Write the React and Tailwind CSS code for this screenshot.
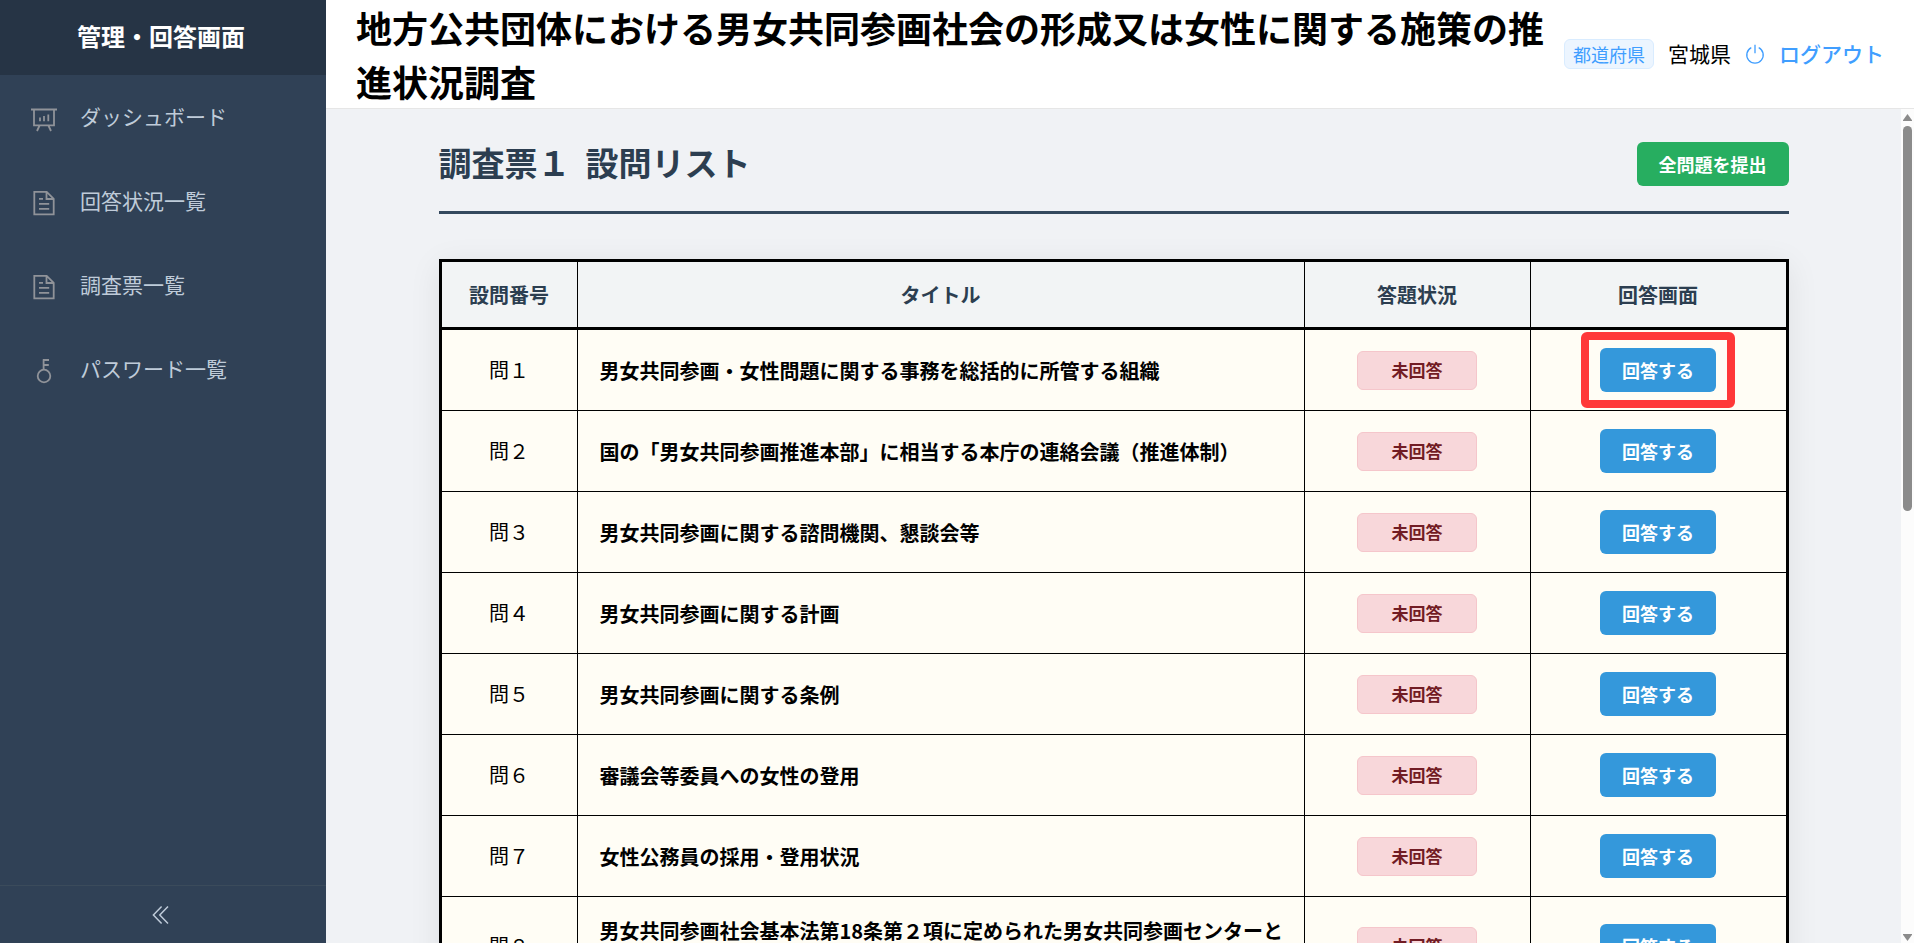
import React from "react";

const questions = [
  { no: "問１", title: "男女共同参画・女性問題に関する事務を総括的に所管する組織", highlighted: true },
  { no: "問２", title: "国の「男女共同参画推進本部」に相当する本庁の連絡会議（推進体制）" },
  { no: "問３", title: "男女共同参画に関する諮問機関、懇談会等" },
  { no: "問４", title: "男女共同参画に関する計画" },
  { no: "問５", title: "男女共同参画に関する条例" },
  { no: "問６", title: "審議会等委員への女性の登用" },
  { no: "問７", title: "女性公務員の採用・登用状況" },
  { no: "問８", title: "男女共同参画社会基本法第18条第２項に定められた男女共同参画センターとその他の施設" },
];

function Icon({ children, className }) {
  return (
    <svg
      viewBox="0 0 28 28"
      className={className}
      fill="none"
      stroke="currentColor"
      strokeWidth="1.8"
      aria-hidden="true"
    >
      {children}
    </svg>
  );
}

function BoardIcon() {
  return (
    <Icon className="size-7 shrink-0">
      <path d="M1 4.5h26M4 4.5v15.8h20V4.5M9.6 20.5 7 26M18.4 20.5 21 26M10 12.5v3.8M14 11v5.3M18.3 9.5v6.8" />
    </Icon>
  );
}

function DocumentIcon() {
  return (
    <Icon className="size-7 shrink-0">
      <path d="M4.3 2.8h12.4l7 7V25.4H4.3zM16.5 2.8v7.2h7.2M9 9.8h4M9 14.8h10.2M9 19.8h10.2" />
    </Icon>
  );
}

function KeyIcon() {
  return (
    <Icon className="size-7 shrink-0">
      <circle cx="14" cy="19" r="6.3" />
      <path d="M13.6 12.8V2.2M13 3h6M13.6 8h5.2" />
    </Icon>
  );
}

const menu = [
  { label: "ダッシュボード", Glyph: BoardIcon },
  { label: "回答状況一覧", Glyph: DocumentIcon },
  { label: "調査票一覧", Glyph: DocumentIcon },
  { label: "パスワード一覧", Glyph: KeyIcon },
];

function Sidebar() {
  return (
    <aside className="flex w-[326px] shrink-0 flex-col bg-[#304156]">
      <div className="flex h-[75px] items-center justify-center bg-[#263445] pr-1 pb-1 text-2xl font-bold text-white">
        管理・回答画面
      </div>
      <nav className="flex flex-1 flex-col">
        {menu.map(({ label, Glyph }) => (
          <a key={label} href="#" className="flex h-[84px] items-center gap-[22px] px-[30px] text-[21px] text-[#bfcbd9]">
            <span className="pt-1 text-[#909399]">
              <Glyph />
            </span>
            {label}
          </a>
        ))}
      </nav>
      <button
        type="button"
        aria-label="メニューを折りたたむ"
        className="flex h-[58px] items-center justify-center border-t border-[#3b4b5b] pr-1 text-[#bfcbd9]"
      >
        <svg viewBox="0 0 18 18" className="size-[18px]" fill="none" stroke="currentColor" strokeWidth="1.5" aria-hidden="true">
          <path d="M9.6.6 1.4 9l8.2 8.4M16 .6 7.8 9l8.2 8.4" />
        </svg>
      </button>
    </aside>
  );
}

function Header() {
  return (
    <header className="flex items-center justify-between border-b border-[#e6e6e6] bg-white px-[30px]">
      <h1 className="flex-1 text-4xl leading-[54px] font-bold text-black">
        地方公共団体における男女共同参画社会の形成又は女性に関する施策の推進状況調査
      </h1>
      <div className="flex shrink-0 items-center gap-[14px] pl-4 text-[21px] whitespace-nowrap">
        <span className="flex h-[30px] items-center rounded-md border border-[#d9ecff] bg-[#ecf5ff] px-2 text-lg text-[#409eff]">
          都道府県
        </span>
        <span className="text-black">宮城県</span>
        <a href="#" className="flex items-center gap-[14px] font-medium text-[#409eff]">
          <svg viewBox="0 0 20 20" className="size-5" fill="none" stroke="currentColor" strokeWidth="1.3" aria-hidden="true">
            <path d="M10 .8v8.4M6.3 3.6a8.2 8.2 0 1 0 7.4 0" />
          </svg>
          ログアウト
        </a>
      </div>
    </header>
  );
}

function QuestionTable() {
  return (
    <table className="w-full table-fixed border-collapse border-[3px] border-black bg-[#fffdf5] text-xl text-black shadow-[0_6px_30px_rgba(0,0,0,0.08)]">
      <colgroup>
        <col className="w-[137px]" />
        <col />
        <col className="w-[226px]" />
        <col className="w-[257px]" />
      </colgroup>
      <thead>
        <tr className="h-[68px] border-b-[3px] border-black bg-[#f2f4f5] text-[#2c3e50]">
          {["設問番号", "タイトル", "答題状況", "回答画面"].map((label) => (
            <th key={label} scope="col" className="border-x border-black font-bold first:border-l-[3px] last:border-r-[3px]">
              {label}
            </th>
          ))}
        </tr>
      </thead>
      <tbody>
        {questions.map((q) => (
          <tr key={q.no} className="border-b border-black">
            <td className="border-r border-black text-center">{q.no}</td>
            <td className="border-r border-black py-[18px] pr-4 pl-[22px] leading-[31px] font-bold">{q.title}</td>
            <td className="border-r border-black text-center">
              <span className="inline-flex h-[39px] w-[120px] items-center justify-center rounded-md border border-[#f5c6cb] bg-[#f8d7da] align-middle text-[17px] font-bold text-[#721c24]">
                未回答
              </span>
            </td>
            <td className="py-[18px] text-center">
              <span className="relative inline-flex align-middle">
                <button type="button" className="h-11 rounded-md bg-[#3498db] px-[22px] text-lg font-bold text-white">
                  回答する
                </button>
                {q.highlighted && (
                  <span className="pointer-events-none absolute -inset-x-[19px] -inset-y-4 rounded-md border-8 border-[#ff3838]" />
                )}
              </span>
            </td>
          </tr>
        ))}
      </tbody>
    </table>
  );
}

function ScrollTrack() {
  return (
    <div className="flex w-[13px] shrink-0 flex-col items-center gap-[5px] bg-[#fcfcfc] pt-[5px] pb-[2px]" aria-hidden="true">
      <svg viewBox="0 0 9 7" className="h-[7px] w-[9px] shrink-0" fill="#8b8b8b">
        <path d="M4.5 0 9 6.2V7H0v-.8z" />
      </svg>
      <div className="min-h-0 flex-1">
        <div className="h-[48%] w-[9px] rounded-full bg-[#8b8b8b]" />
      </div>
      <svg viewBox="0 0 9 7" className="h-[7px] w-[9px] shrink-0" fill="#8b8b8b">
        <path d="M4.5 7 9 .8V0H0v.8z" />
      </svg>
    </div>
  );
}

export default function App() {
  return (
    <div lang="ja" className="flex h-screen overflow-hidden font-['Noto_Sans_CJK_JP',sans-serif]">
      <Sidebar />
      <div className="flex min-w-0 flex-1 flex-col">
        <Header />
        <div className="flex min-h-0 flex-1 bg-[#f0f2f5]">
          <main className="min-w-0 flex-1 overflow-hidden px-[30px] pt-[33px]">
            <div className="mx-auto max-w-[1350px]">
              <div className="mb-[45px] flex items-start justify-between border-b-[3px] border-[#34495e] pb-[25px]">
                <h2 className="text-[33px] leading-10 font-bold text-[#2c3e50]">調査票１&nbsp;&nbsp;設問リスト</h2>
                <button type="button" className="h-11 rounded-md bg-[#27ae60] px-[22px] text-lg font-bold text-white">
                  全問題を提出
                </button>
              </div>
              <QuestionTable />
            </div>
          </main>
          <ScrollTrack />
        </div>
      </div>
    </div>
  );
}
